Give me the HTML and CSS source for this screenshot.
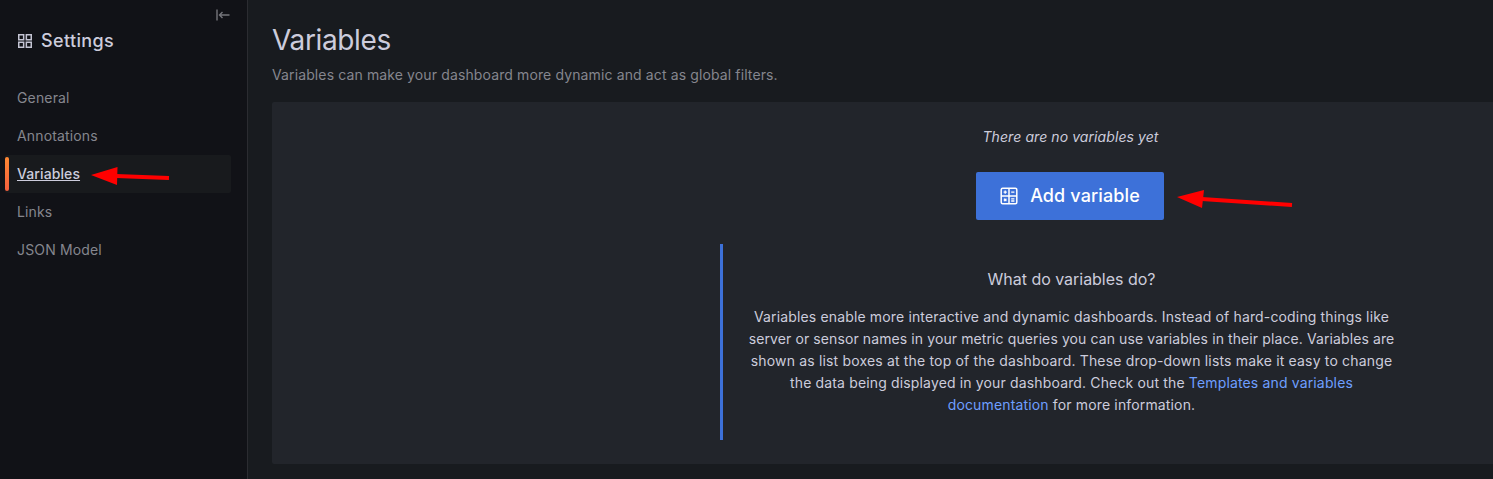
FILE: index.html
```html
<!DOCTYPE html>
<html lang="en"><head><meta charset="utf-8"><title>Variables - Settings</title><link rel="stylesheet" href="styles.css"></head>
<body>
<div class="app">
<aside class="sidebar">
  <svg class="collapse" viewBox="0 0 14 12"><path d="M1 .5v11M13.500 6H3.500M6.500 3L3.500 6L6.500 9"/></svg>
  <h2 class="settings"><svg class="apps" viewBox="0 0 14 14"><path d="M.75 .75h4.900v4.900h-4.900zM8.350 .75h4.900v4.900h-4.900zM.75 8.350h4.900v4.900h-4.900zM8.350 8.350h4.900v4.900h-4.900z"/></svg>Settings</h2>
  <nav class="nav">
    <a>General</a><a>Annotations</a><a class="active"><span>Variables</span></a><a>Links</a><a>JSON Model</a>
  </nav>
</aside>
<main class="main">
  <h1>Variables</h1>
  <p class="sub">Variables can make your dashboard more dynamic and act as global filters.</p>
  <section class="panel">
    <div class="content">
    <em class="empty">There are no variables yet</em>
    <button class="add"><svg class="calc" viewBox="0 0 18 18"><rect x="1.200" y="1.200" width="15.600" height="15.600" rx="1.500"/><path d="M9 1v16M1 9h16"/><path class="marks" d="M3.600 5.200h3.200M5.200 3.600v3.200M11.200 5.200h3.200M4 11.700l2.400 2.400M6.400 11.700l-2.400 2.400M11.200 11.900h3.200M11.200 14h3.200"/></svg><span>Add variable</span></button>
    <div class="info">
      <h3>What do variables do?</h3>
      <p>Variables enable more interactive and dynamic dashboards. Instead of hard-coding things like<br><span class="tight">server or sensor names in your metric queries you can use variables in their place. Variables are</span><br><span class="loose">shown as list boxes at the top of the dashboard. These drop-down lists make it easy to change</span><br>the data being displayed in your dashboard. Check out the <a>Templates and variables<br>documentation</a> for more information.</p>
    </div>
    </div>
  </section>
</main>
<svg class="arrows" viewBox="0 0 1493 479"><path d="M91 175L117.500 167L117 185ZM1177 197L1204 190L1202 208Z"/><path class="shaft" d="M116 176L169 178M1202 199L1292 205"/></svg>
</div>
</body></html>
```
FILE: styles.css
```css
*{box-sizing:border-box}
body{margin:0;background:#181b1f;color:#ccccdc;font:14px/22px Inter,sans-serif;letter-spacing:.15px;overflow:hidden}
.app{position:relative;display:flex;width:1493px;height:479px}
.sidebar{display:flex;flex-direction:column;width:248px;flex:none;background:#111217;border-right:1px solid #2b2c31;padding:9px 16px 0 5px}
.collapse{width:14px;height:12px;align-self:flex-end;margin-right:1px;fill:none;stroke:#74757b;stroke-width:1.400}
.settings{display:flex;align-items:center;gap:9px;margin:9px 0 0 13px;font-size:18px;line-height:22px;font-weight:500;letter-spacing:.36px}
.apps{width:14px;height:14px;fill:none;stroke:#c4c4d3;stroke-width:1.500}
.nav{margin-top:27px}
.nav a{display:block;height:38px;line-height:38px;padding-left:12px;color:#85868e}
.nav .active{position:relative;background:#181a1d;border-radius:2px;color:#ccccdc;font-weight:500;letter-spacing:.1px}
.active span{text-decoration:underline}
.active::before{content:"";position:absolute;left:0;top:2px;width:4px;height:34px;border-radius:2px;background:linear-gradient(#ff8833,#f55f3e)}
.main{flex:1;min-width:0;padding:23px 0 0 24px}
h1{margin:0;font-size:28px;line-height:34px;font-weight:400;letter-spacing:-.36px}
.sub{margin:7px 0 16px;color:#85868e;letter-spacing:.122px}
.panel{height:362px;background:#22252b;border-radius:2px 0 0 2px;padding-left:448px}
.content{width:700px;display:flex;flex-direction:column;align-items:center;padding-top:24px}
.empty{line-height:22px;letter-spacing:.08px;padding-left:1px}
.add{display:flex;align-items:center;justify-content:center;gap:12px;width:188px;height:48px;margin:24px 0;border:0;border-radius:2px;background:#3d71d9;color:#fff;font:500 18px/22px Inter,sans-serif;letter-spacing:.12px;padding:0}
.calc{width:18px;height:18px;fill:none;stroke:#fff;stroke-width:1.500}
.marks{stroke-width:1.300}
.info{width:700px;height:196px;border-left:3px solid #3d71d9;padding-top:24px;text-align:center}
h3{margin:0 0 16px;font-size:16px;line-height:22px;font-weight:400;letter-spacing:-.03px}
.info p{margin:0}
.tight{letter-spacing:.1px}
.loose{letter-spacing:.17px}
.info a{color:#6e9fff}
.arrows{position:absolute;left:0;top:0;width:1493px;height:479px;fill:#f00;pointer-events:none}
.shaft{fill:none;stroke:#f00;stroke-width:4}
```
